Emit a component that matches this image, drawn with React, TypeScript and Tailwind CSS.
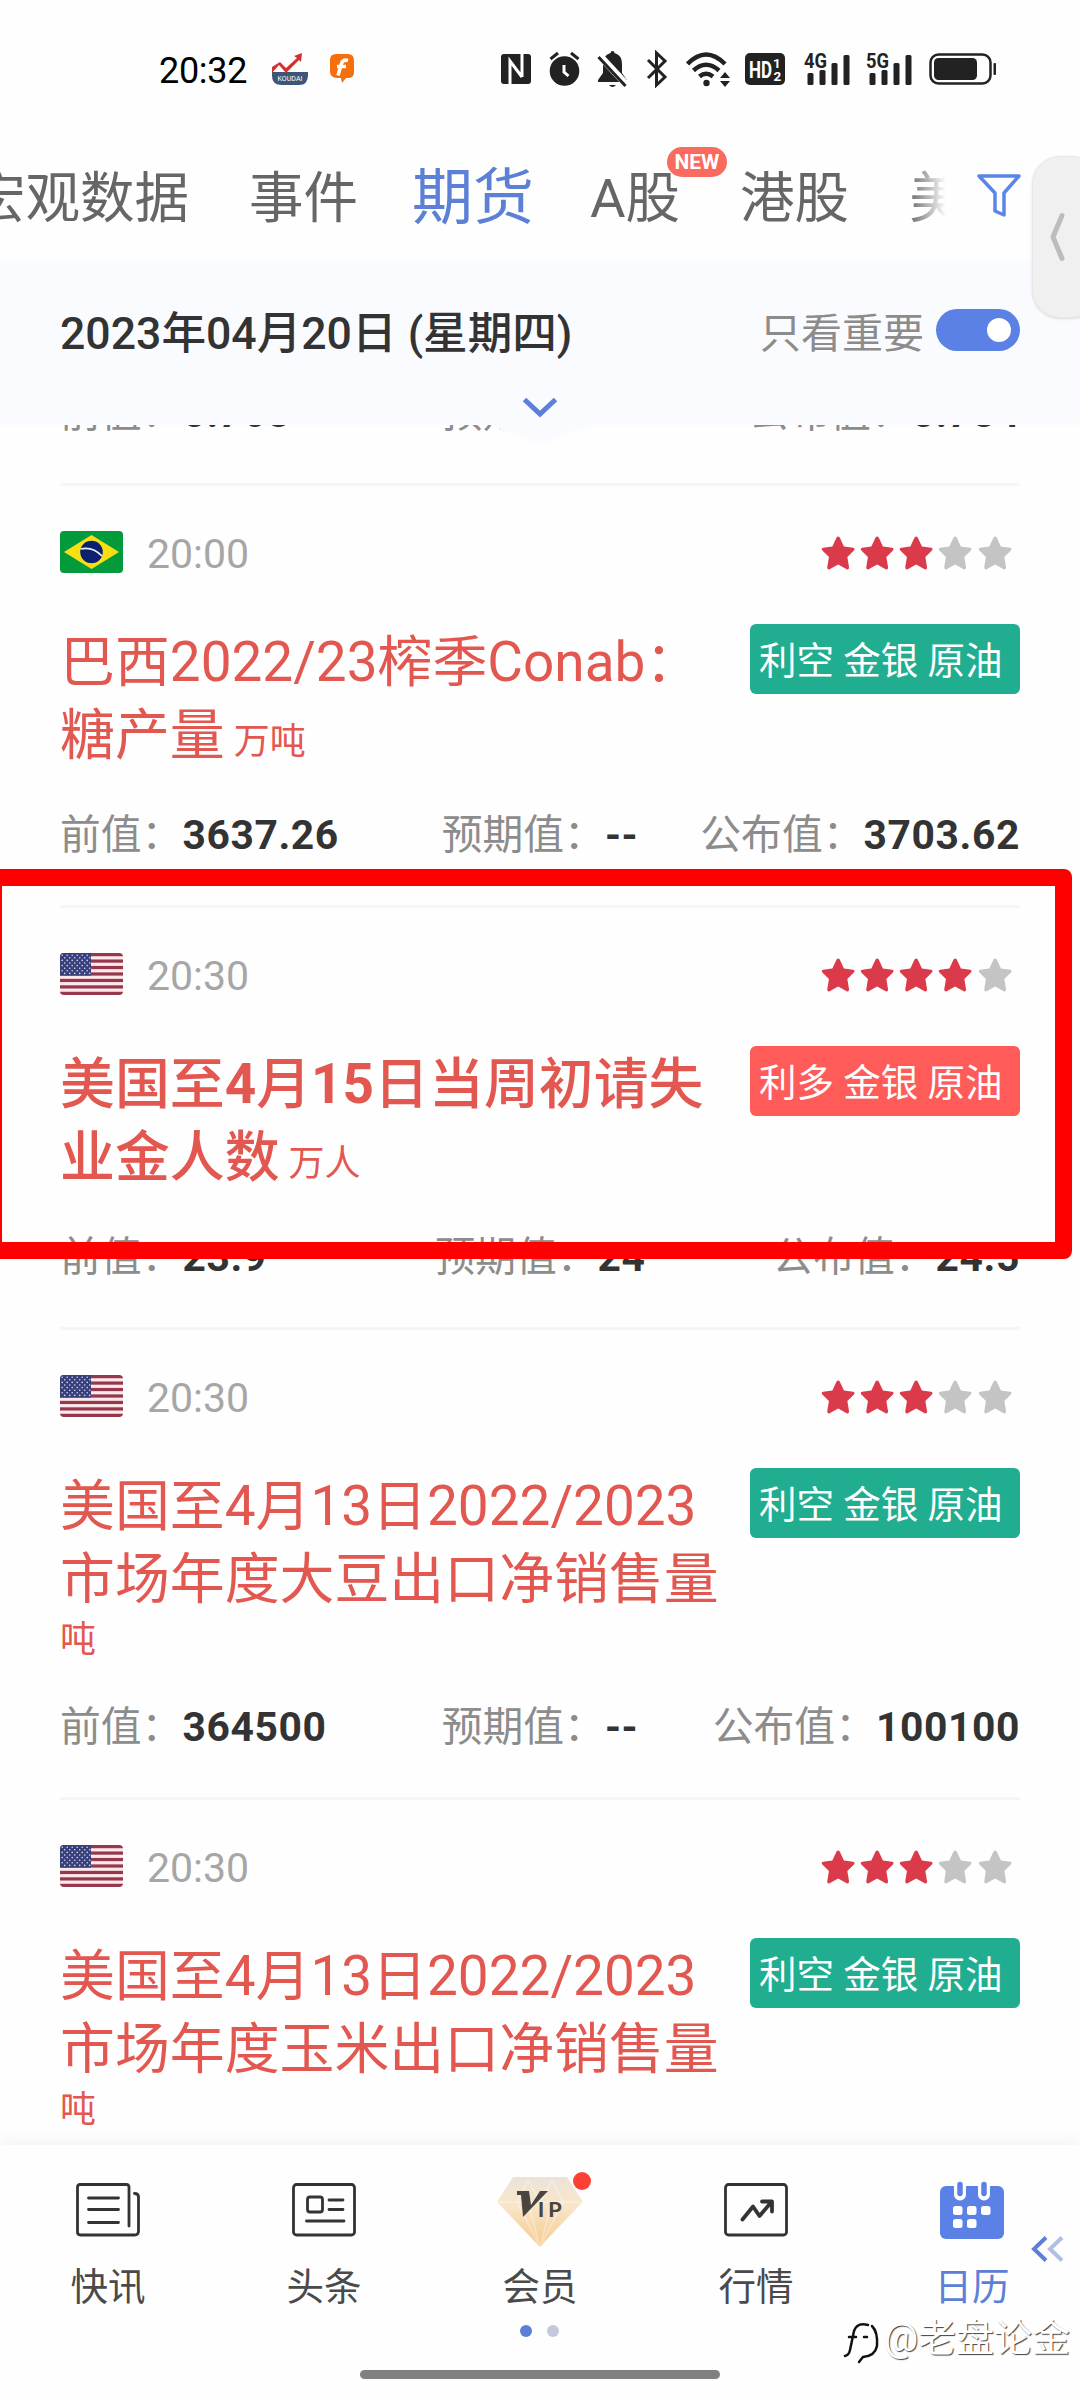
import clsx from "clsx";

interface CalendarEvent {
    country: "br" | "us";
    time: string;
    stars: number;
    title: string;
    unit: string;
    effect: "利空" | "利多";
    bold?: boolean;
    previous: string;
    forecast: string;
    actual: string;
}

const events: CalendarEvent[] = [
    { country: "br", time: "20:00", stars: 3, title: "巴西2022/23榨季Conab：糖产量", unit: "万吨", effect: "利空", previous: "3637.26", forecast: "--", actual: "3703.62" },
    { country: "us", time: "20:30", stars: 4, title: "美国至4月15日当周初请失业金人数", unit: "万人", effect: "利多", bold: true, previous: "23.9", forecast: "24", actual: "24.5" },
    { country: "us", time: "20:30", stars: 3, title: "美国至4月13日2022/2023市场年度大豆出口净销售量", unit: "吨", effect: "利空", previous: "364500", forecast: "--", actual: "100100" },
    { country: "us", time: "20:30", stars: 3, title: "美国至4月13日2022/2023市场年度玉米出口净销售量", unit: "吨", effect: "利空", previous: "327700", forecast: "--", actual: "312100" },
];

function Signal({ label }: { label: string }) {
    return (
        <svg width="48" height="36" viewBox="0 0 48 36" fill="#222">
            <text x="0" y="16.5" fontSize="20" fontWeight="700" textLength="23" lengthAdjust="spacingAndGlyphs">{label}</text>
            <rect x="3.5" y="22" width="6" height="12" rx="1.5" />
            <rect x="15.5" y="19" width="6" height="15" rx="1.5" />
            <rect x="27.5" y="12" width="6" height="22" rx="1.5" />
            <rect x="39.5" y="4" width="6" height="30" rx="1.5" />
        </svg>
    );
}

function StatusBar() {
    return (
        <div className="flex h-[138px] shrink-0 items-center pl-[159px] pr-[83px]">
            <span className="mt-[3px] w-[92px] text-[36px] leading-[44px] tracking-[-0.3px] text-black">20:32</span>
            <svg className="ml-5" width="38" height="34" viewBox="0 0 38 34">
                <path d="M1 20h36v3q0 10-9 10H11Q1 33 1 24Z" fill="#3d5675" />
                <path d="M1 21V15l8-5 6 6L26 6l-3-2 8-3-1 9-2-2-13 13-7-8Z" fill="#d2322d" />
                <text x="6.500" y="29" fontSize="7" fill="#fff" textLength="25">KOUDAI</text>
            </svg>
            <svg className="ml-[20px]" width="26" height="32" viewBox="0 0 26 32">
                <path d="M7 1h12q6 0 6 7v11q0 6-6 6h-2l-4 5-1-5H8q-7 0-7-7V7q0-6 6-6Z" fill="#f56f0c" />
                <path d="M19 7.500q-5-1.500-6.500 3L9 22.500M8 13.500h9" stroke="#fff" strokeWidth="3.500" fill="none" />
            </svg>

            <div className="ml-auto flex items-center">
                {/* NFC */}
                <svg width="30" height="34" viewBox="0 0 30 34">
                    <rect y="2" width="30" height="30" rx="3" fill="#222" />
                    <path d="M9 32V9l12 16M21 2v23" stroke="#fff" strokeWidth="3" fill="none" />
                </svg>
                {/* Alarm */}
                <svg className="ml-[18px]" width="31" height="36" viewBox="0 0 31 36">
                    <circle cx="15.500" cy="20" r="14.800" fill="#222" />
                    <path d="M1.500 8L9 2M29.500 8L22 2" stroke="#222" strokeWidth="3" />
                    <path d="M15 14v7l4.500 4" stroke="#fff" strokeWidth="3" fill="none" />
                </svg>
                {/* Muted bell */}
                <svg className="ml-[17px]" width="31" height="38" viewBox="0 0 31 38">
                    <path d="M13.500 3q0-2 2-2t2 2q7.500 2 7.500 11v9l5 7v2H1v-2l5-7v-9q0-9 7.500-11Z" fill="#222" />
                    <path d="M12 35h7q-3.500 4-7 0Z" fill="#222" />
                    <path d="M1 4l29 31" stroke="#fff" strokeWidth="7" />
                    <path d="M1.500 7l27 29" stroke="#222" strokeWidth="3" />
                </svg>
                {/* Bluetooth */}
                <svg className="ml-[18px]" width="22" height="38" viewBox="0 0 22 38">
                    <path d="M2 10l17 17-8.500 8V3L19 11 2 28" stroke="#222" strokeWidth="3" fill="none" />
                </svg>
                {/* Wi-Fi */}
                <svg className="ml-[18px]" width="44" height="38" viewBox="0 0 44 38" fill="none" stroke="#222">
                    <path d="M1.500 14Q20 -5 39 14M7.500 20.500Q20 9 33 20.500M13.500 26.500Q20 21 27 26.500" strokeWidth="4.500" />
                    <circle cx="20.500" cy="33" r="3.200" fill="#222" stroke="none" />
                    <path d="M34 28l5-6 5 6ZM34 31l5 6 5-6Z" fill="#222" stroke="none" />
                </svg>
                <svg className="ml-[15px]" width="40" height="34" viewBox="0 0 40 34">
                    <rect y="1" width="40" height="32" rx="5" fill="#222" />
                    <text x="4" y="25.500" fontSize="24" fontWeight="700" fill="#fff" textLength="23" lengthAdjust="spacingAndGlyphs">HD</text>
                    <text x="28" y="16" fontSize="13.500" fontWeight="700" fill="#fff">1</text>
                    <text x="28.500" y="28.500" fontSize="13.500" fontWeight="700" fill="#fff">2</text>
                </svg>
                <span className="ml-[19px]"><Signal label="4G" /></span>
                <span className="ml-[14px]"><Signal label="5G" /></span>
                <svg className="ml-[15px]" width="68" height="32" viewBox="0 0 68 32">
                    <rect x="1.500" y="1.500" width="60" height="29" rx="8" fill="none" stroke="#222" strokeWidth="2.500" />
                    <rect x="5" y="5" width="43" height="22" rx="4.500" fill="#222" />
                    <rect x="64.500" y="10" width="2.500" height="12" rx="1" fill="#222" />
                </svg>
            </div>
        </div>
    );
}

function CategoryTabs() {
    return (
        <div className="flex h-[122px] shrink-0 items-center pb-[2px] text-[54.500px] leading-[90px] whitespace-nowrap text-[#666]">
            <div className="flex w-[946px] items-center overflow-hidden mask-r-from-96%">
                <span className="-ml-[29px]">宏观数据</span>
                <span className="ml-[60px]">事件</span>
                <span className="ml-[54px] text-[61px] text-[#5b80d6]">期货</span>
                <span className="ml-[56px]">A股</span>
                <span className="ml-[60px]">港股</span>
                <span className="ml-[60px]">美股</span>
            </div>
            <svg className="mb-[6px] ml-[31px]" width="44" height="44" viewBox="0 0 44 44" fill="none" stroke="#5b85e8" strokeWidth="3.500" strokeLinejoin="round">
                <path d="M2 3h40L27 20v22l-9-4V20Z" />
            </svg>
        </div>
    );
}

function DateBar() {
    return (
        <div className="relative z-10 h-[165px] shrink-0 bg-[#fafbff] px-[60px] pt-[34px]">
            <div className="flex h-[76px] items-center justify-between">
                <span className="mt-[3px] text-[44.600px] leading-[60px] font-medium text-[#333]">2023年04月20日 (星期四)</span>
                <div className="flex items-center gap-3">
                    <span className="mt-[3px] text-[41px] leading-[60px] text-[#8c8c8c]">只看重要</span>
                    <div className="mb-1 flex h-[42px] w-[84px] items-center justify-end rounded-full bg-[#5b80e6] pr-[9px]">
                        <div className="size-6 rounded-full bg-white" />
                    </div>
                </div>
            </div>
            {/* Pull-down handle hanging over the list */}
            <svg className="absolute top-[130px] left-[490px]" width="100" height="56" viewBox="0 0 100 56" fill="none">
                <path d="M0 35L45 53q5 2 10 0L100 35Z" fill="#fafbff" />
                <path d="M34.500 9.500L50 24 65.500 9.500" stroke="#5b80d6" strokeWidth="5" />
            </svg>
        </div>
    );
}

function Flag({ country }: { country: CalendarEvent["country"] }) {
    if (country === "br") {
        return (
            <svg className="rounded" width="63" height="42" viewBox="0 0 63 42">
                <rect width="63" height="42" fill="#029a3a" />
                <path d="M31.500 4L59 21 31.500 38 4 21Z" fill="#f8df13" />
                <circle cx="31.500" cy="21" r="11.300" fill="#0b2170" />
                <path d="M20.500 18q12-3 21.500 7" stroke="#e8eef8" strokeWidth="1.800" fill="none" />
            </svg>
        );
    }
    return (
        <svg className="rounded" width="63" height="42" viewBox="0 0 63 42">
            <rect width="63" height="42" fill="#fbe9ec" />
            {[0, 1, 2, 3, 4, 5, 6].map((i) => (
                <rect key={i} y={i * 6.46} width="63" height="3.230" fill="#96384c" />
            ))}
            <rect width="31" height="22.600" fill="#38407c" />
            {[0, 1, 2, 3, 4, 5, 6, 7].map((row) =>
                [0, 1, 2, 3, 4, 5].map((col) => (
                    <circle key={`${row}-${col}`} cx={2.2 + col * 5 + (row % 2) * 2.5} cy={2.2 + row * 2.6} r="0.800" fill="#d5d8ea" />
                ))
            )}
        </svg>
    );
}

function Stars({ count }: { count: number }) {
    return (
        <div className="mt-px mr-[8px] flex gap-[5px]">
            {[1, 2, 3, 4, 5].map((n) => (
                <svg key={n} width="34.300" height="34" viewBox="0 0 34 34" className={n <= count ? "fill-[#db3a4a]" : "fill-[#c4c4c4]"}>
                    <path d="M15.400 1.600q1.600-2 3.200 0l4.200 9 9.200 1.200q2.400.8.800 2.600l-6.600 6.600 1.700 10.200q0 2.800-2.400 2L17 28.500 8.500 33.200q-2.400.8-2.400-2L7.800 21 1.200 14.400Q-.4 12.600 2 11.800l9.200-1.200Z" />
                </svg>
            ))}
        </div>
    );
}

function Values({ previous, forecast, actual }: Pick<CalendarEvent, "previous" | "forecast" | "actual">) {
    const cells = [
        { label: "前值：", value: previous, align: "text-left" },
        { label: "预期值：", value: forecast, align: "text-center" },
        { label: "公布值：", value: actual, align: "text-right" },
    ];
    return (
        <div className="grid h-[50px] shrink-0 grid-cols-3 text-[40.800px] leading-[52px] whitespace-nowrap">
            {cells.map((cell) => (
                <div key={cell.label} className={cell.align}>
                    <span className="text-[#8c8c8c]">{cell.label}</span>
                    <span className="font-bold tracking-[0.600px] text-[#333]">{cell.value}</span>
                </div>
            ))}
        </div>
    );
}

// Important titles set the digits heavier than the characters around them
function Title({ text, bold }: { text: string; bold?: boolean }) {
    if (!bold) {
        return <span className="text-[54.900px] leading-[73px]">{text}</span>;
    }
    return (
        <span className="text-[54.900px] leading-[73px] font-medium">
            {text.split(/(\d+)/).map((part, i) => (
                <span key={i} className={clsx(i % 2 === 1 && "font-bold")}>{part}</span>
            ))}
        </span>
    );
}

function EventRow({ event }: { event: CalendarEvent }) {
    return (
        <div className="border-t-[3px] border-[#f6f6f6] pt-[45px] pb-[46px]">
            <div className="flex h-[42px] items-center">
                <Flag country={event.country} />
                <span className="mt-[3px] ml-[24px] flex-1 text-[41px] leading-[42px] text-[#a6a6a6]">{event.time}</span>
                <Stars count={event.stars} />
            </div>
            <div className="mt-[51px] flex items-start justify-between">
                <div className="w-[664px] pt-[2px] text-[36px] leading-[48px] text-[#e2574f]">
                    <Title text={event.title} bold={event.bold} /> {event.unit}
                </div>
                <div className={clsx("flex h-[70px] w-[270px] shrink-0 items-center rounded-md pt-[3px] pl-[9px] text-[37.500px] leading-[60px] whitespace-nowrap text-white", event.effect === "利空" ? "bg-[#21ae90]" : "bg-[#ff5b58]")}>
                    {event.effect} 金银 原油
                </div>
            </div>
            <div className="mt-[37px]">
                <Values previous={event.previous} forecast={event.forecast} actual={event.actual} />
            </div>
        </div>
    );
}

function NavItem({ label, active, children }: { label: string; active?: boolean; children: React.ReactNode }) {
    return (
        <div className="flex flex-1 flex-col items-center">
            <div className="relative flex h-[76px] items-center justify-center">{children}</div>
            <span className={clsx("mt-[12px] text-[37.500px] leading-[54px]", active ? "text-[#5b80d6]" : "text-[#4a4a4a]")}>{label}</span>
        </div>
    );
}

function BottomNav() {
    return (
        <div className="relative h-[255px] shrink-0 bg-[#fefefe] shadow-[0_-4px_14px_rgba(0,0,0,0.050)]">
            <div className="flex pt-[27px]">
                <NavItem label="快讯">
                    <svg width="64" height="54" viewBox="0 0 64 54" fill="none" stroke="#333" strokeWidth="2.800" strokeLinecap="round">
                        <path d="M53 43V4q0-2.500-2.500-2.500H4Q1.500 1.500 1.500 4v45q0 3 3 3h54q4 0 4-4V14q0-3.500-4-3.500M12.500 15h30M12.500 26.500h30M12.500 39.500h30" />
                    </svg>
                </NavItem>
                <NavItem label="头条">
                    <svg width="64" height="54" viewBox="0 0 64 54" fill="none" stroke="#333" strokeWidth="2.800" strokeLinecap="round">
                        <rect x="1.500" y="1.500" width="61" height="50.500" rx="3" />
                        <rect x="15.500" y="14" width="15" height="15" rx="2.500" />
                        <path d="M37 17h14M37 26.500h14M14.500 38h37.500" />
                    </svg>
                </NavItem>
                <NavItem label="会员">
                    <svg className="mt-1" width="86" height="70" viewBox="0 0 86 70">
                        <defs>
                            <linearGradient id="gem" x1="0" y1="0" x2="0" y2="1">
                                <stop offset="0" stopColor="#ebe3da" />
                                <stop offset="0.400" stopColor="#f9e6c9" />
                                <stop offset="1" stopColor="#f5c98d" />
                            </linearGradient>
                        </defs>
                        <path d="M16 0h54l16 25L43 70 0 25Z" fill="url(#gem)" />
                        <path d="M0 25h86L43 70M31 3L20 25l23 45M55 3l11 22-23 45M31 25l12 45 12-45M31 3l12 22L55 3" stroke="#fff" strokeOpacity="0.300" strokeWidth="2" fill="none" />
                        <path d="M20 14h12l2 14L43 14h8L26 40l-2-22h-4Z" fill="#4a4540" />
                        <text x="41" y="40" fontSize="21" fontWeight="700" fill="#4a4540" textLength="24">IP</text>
                    </svg>
                    <span className="absolute top-0 -right-[8px] size-[18px] rounded-full bg-[#fd4034]" />
                </NavItem>
                <NavItem label="行情">
                    <svg width="64" height="54" viewBox="0 0 64 54" fill="none" stroke="#333" strokeWidth="2.800" strokeLinecap="round">
                        <rect x="1.500" y="1.500" width="61" height="50.500" rx="3" />
                        <path d="M18.500 36.500l10.500-13 6.500 9.500L47 19.500M38 18.500h10v10" strokeWidth="3.800" strokeLinejoin="round" />
                    </svg>
                </NavItem>
                <NavItem label="日历" active>
                    <svg width="64" height="58" viewBox="0 0 64 58">
                        <rect y="5" width="64" height="53" rx="6" fill="#5b80e6" />
                        <path d="M20 3.500v10M44 3.500v10" stroke="#fefefe" strokeWidth="12" strokeLinecap="round" />
                        <path d="M20 3.500v9M44 3.500v9" stroke="#5b80e6" strokeWidth="5.500" strokeLinecap="round" />
                        <g fill="#fff">
                            <rect x="13" y="25" width="9.500" height="9" rx="2.500" />
                            <rect x="27" y="25" width="9.500" height="9" rx="2.500" />
                            <rect x="41" y="25" width="9.500" height="9" rx="2.500" />
                            <rect x="13" y="38" width="9.500" height="9" rx="2.500" />
                            <rect x="27" y="38" width="9.500" height="9" rx="2.500" />
                        </g>
                    </svg>
                </NavItem>
            </div>
            <div className="mt-[11px] flex justify-center gap-[15px] pr-px">
                <span className="size-3 rounded-full bg-[#5b80d6]" />
                <span className="size-3 rounded-full bg-[#c5c8d8]" />
            </div>
            <div className="mx-auto mt-[33px] h-[9px] w-[360px] rounded-full bg-[#808080]" />

            <svg className="absolute top-[91px] left-[1030px]" width="34" height="26" viewBox="0 0 34 26" fill="none" strokeWidth="4">
                <path d="M16 1.500L4 13l12 11.500" stroke="#5b80d6" />
                <path d="M32 1.500L20 13l12 11.500" stroke="#b0bfe4" />
            </svg>

            {/* Watermark */}
            <div className="absolute top-[166px] right-[10px] flex items-center text-[38px] leading-[54px] text-white [text-shadow:1px_1px_1px_rgba(0,0,0,0.750)]">
                <svg className="mt-2 mr-1" width="38" height="44" viewBox="0 0 38 44" fill="none" strokeLinecap="round">
                    <path d="M26 5q-11-3-14 6L8 30q-1 5-5 6M7 17h7M22 17h3" stroke="#111" strokeWidth="2.500" />
                    <path d="M30 6q6 6 5 20-2 10-14 11l-4 5" stroke="#111" strokeWidth="2.500" />
                </svg>
                @老盘论金
            </div>
        </div>
    );
}

export default function App() {
    return (
        <div className="relative flex h-[2400px] w-[1080px] flex-col overflow-hidden bg-[#fefefe] font-[Roboto,'Noto_Sans_CJK_SC',sans-serif]">
            <StatusBar />
            <CategoryTabs />
            <DateBar />

            <div className="min-h-0 flex-1 overflow-hidden px-[60px]">
                {/* Tail of the row scrolled under the date bar */}
                <div className="flex h-[58px] flex-col justify-end pb-[46px]">
                    <Values previous="5.768" forecast="--" actual="5.784" />
                </div>
                {events.map((event, index) => (
                    <EventRow key={index} event={event} />
                ))}
            </div>

            <BottomNav />

            <span className="absolute top-[147px] left-[667px] flex h-[30px] w-[60px] items-center justify-center rounded-full bg-[#fb6a5e] text-[21px] leading-none font-bold text-white">NEW</span>

            {/* Edge drawer handle */}
            <div className="absolute top-[156px] -right-5 z-20 flex h-[162px] w-[68px] items-center rounded-[28px] border border-[#e8e8e8] bg-[#f0f0f0] pl-4 shadow-sm">
                <svg width="16" height="50" viewBox="0 0 16 50" fill="none" stroke="#bcbcbc" strokeWidth="5" strokeLinecap="round" strokeLinejoin="round">
                    <path d="M13 3.500L4 25l9 21.500" />
                </svg>
            </div>

            {/* Highlight frame */}
            <div className="absolute top-[869px] -left-[15px] z-20 h-[390px] w-[1087px] rounded-lg border-[17px] border-[#fe0000]" />
        </div>
    );
}
